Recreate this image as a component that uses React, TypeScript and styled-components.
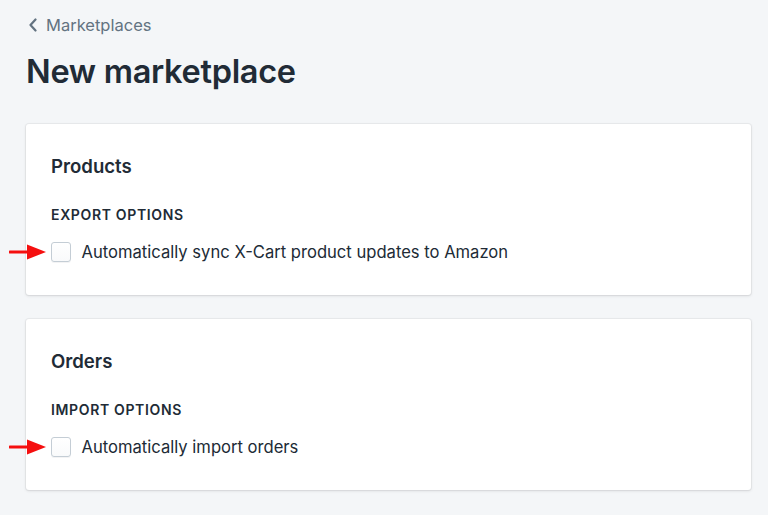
import React from "react";
import styled, { createGlobalStyle } from "styled-components";

const GlobalStyle = createGlobalStyle`
  html, body {
    margin: 0;
    padding: 0;
    background: #f4f6f8;
    font-family: Inter, "Noto Sans", sans-serif;
    color: #212b36;
  }
`;

const Page = styled.div`
  padding: 14px 17px 24px 26px;
`;

const Breadcrumb = styled.a`
  display: flex;
  align-items: center;
  gap: 8px;
  color: #637381;
  font-size: 16.5px;
  line-height: 22px;
  margin-left: 2px;
  cursor: pointer;
`;

const Title = styled.h1`
  margin: 16px 0 0;
  font-size: 32.5px;
  font-weight: 600;
  line-height: 40px;
  letter-spacing: -0.3px;
`;

const Cards = styled.div`
  display: flex;
  flex-direction: column;
  gap: 24px;
  margin-top: 32px;
`;

const Card = styled.section`
  position: relative;
  background: #fff;
  border-radius: 3px;
  box-shadow: 0 0 0 1px rgba(63, 63, 68, 0.05), 0 1px 3px 0 rgba(63, 63, 68, 0.15);
  padding: 29px 25px 31px;
`;

const CardTitle = styled.h2`
  margin: 0;
  font-size: 18.6px;
  font-weight: 600;
  line-height: 26px;
`;

const Subheading = styled.h3`
  margin: 26px 0 0;
  font-size: 14px;
  font-weight: 600;
  line-height: 20px;
  letter-spacing: 0.65px;
  text-transform: uppercase;
`;

const Option = styled.label`
  position: relative;
  display: flex;
  align-items: center;
  gap: 10.5px;
  margin-top: 15px;
  font-size: 16.6px;
  line-height: 24px;
  cursor: pointer;
`;

const Box = styled.span`
  width: 18px;
  height: 18px;
  border: 1px solid #c4cdd5;
  border-radius: 3px;
  background: linear-gradient(180deg, #fff, #f9fafb);
  box-shadow: 0 1px 0 0 rgba(22, 29, 37, 0.05);
  flex-shrink: 0;
`;

const Arrow = styled.svg`
  position: absolute;
  left: -42px;
  top: 50%;
  margin-top: -8px;
`;

const Chevron = () => (
  <svg width="10" height="14" viewBox="0 0 10 14">
    <path d="M7.5 1.5 L2.5 7 L7.5 12.5" fill="none" stroke="#637381" strokeWidth="2.2" strokeLinecap="round" strokeLinejoin="round" />
  </svg>
);

const CheckOption: React.FC<{ label: string }> = ({ label }) => (
  <Option>
    <Arrow width="38" height="16" viewBox="0 0 38 16">
      <line x1="1" y1="8" x2="22" y2="8" stroke="#f50f0f" strokeWidth="3" strokeLinecap="round" />
      <polygon points="18,0.5 37,8 18,15.5" fill="#f50f0f" />
    </Arrow>
    <Box />
    {label}
  </Option>
);

const App: React.FC = () => (
  <>
    <GlobalStyle />
    <Page>
      <Breadcrumb>
        <Chevron />
        Marketplaces
      </Breadcrumb>
      <Title>New marketplace</Title>
      <Cards>
        <Card>
          <CardTitle>Products</CardTitle>
          <Subheading>Export options</Subheading>
          <CheckOption label="Automatically sync X-Cart product updates to Amazon" />
        </Card>
        <Card>
          <CardTitle>Orders</CardTitle>
          <Subheading>Import options</Subheading>
          <CheckOption label="Automatically import orders" />
        </Card>
      </Cards>
    </Page>
  </>
);

export default App;
